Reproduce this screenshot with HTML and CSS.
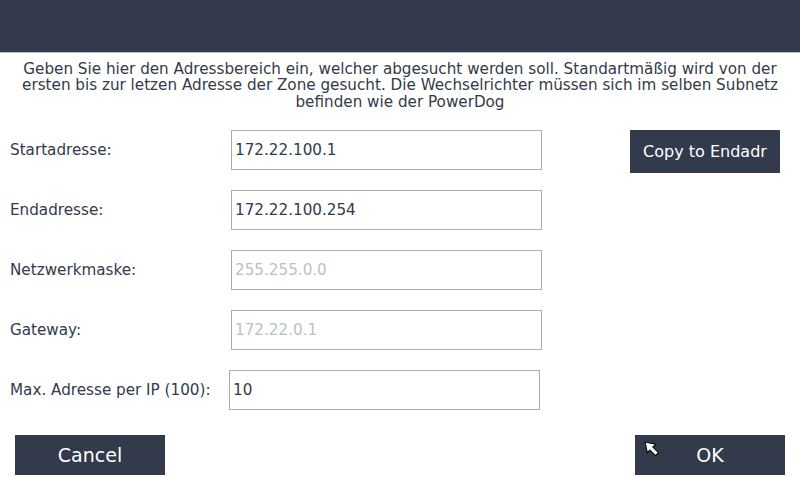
FILE: index.html
```html
<!DOCTYPE html>
<html lang="de">
<head>
<meta charset="utf-8">
<title>Adressbereich</title>
<link rel="stylesheet" href="styles.css">
</head>
<body>
<div class="screen">
  <header class="topbar"></header>
  <p class="intro">Geben Sie hier den Adressbereich ein, welcher abgesucht werden soll. Standartmäßig wird von der ersten bis zur letzen Adresse der Zone gesucht. Die Wechselrichter müssen sich im selben Subnetz befinden wie der PowerDog</p>
  <div class="form">
    <div class="row">
      <label class="label">Startadresse:</label>
      <input class="field" type="text" value="172.22.100.1">
      <button class="btn btn-copy">Copy to Endadr</button>
    </div>
    <div class="row">
      <label class="label">Endadresse:</label>
      <input class="field" type="text" value="172.22.100.254">
    </div>
    <div class="row">
      <label class="label">Netzwerkmaske:</label>
      <input class="field" type="text" placeholder="255.255.0.0">
    </div>
    <div class="row">
      <label class="label">Gateway:</label>
      <input class="field" type="text" placeholder="172.22.0.1">
    </div>
    <div class="row">
      <label class="label label-max">Max. Adresse per IP (100):</label>
      <input class="field" type="text" value="10">
    </div>
  </div>
  <div class="actions">
    <button class="btn btn-action">Cancel</button>
    <button class="btn btn-action">OK</button>
  </div>
  <svg class="cursor" width="18" height="18" viewBox="0 0 16 16">
    <path d="M1 1 L3 10.5 L5.2 8 L10.2 13 L12.8 10.4 L7.8 5.4 L10.5 3 Z" fill="#ffffff" stroke="#000000" stroke-width="0.9" stroke-linejoin="miter"/>
  </svg>
</div>
</body>
</html>
```

FILE: styles.css
```css
* { box-sizing: border-box; }

html, body {
  margin: 0;
  padding: 0;
  background: #ffffff;
}

.screen {
  position: relative;
  width: 800px;
  height: 480px;
  overflow: hidden;
  font-family: "DejaVu Sans", sans-serif;
  color: #323a4b;
}

.topbar {
  height: 53px;
  background: #323a4b;
  border-bottom: 1px solid #b9bec8;
}

.intro {
  margin: 7.5px 18px 0;
  font-family: "DejaVu Sans", sans-serif;
  font-size: 15.2px;
  line-height: 16.5px;
  text-align: center;
  color: #333a47;
}

.form {
  display: flex;
  flex-direction: column;
  gap: 20px;
  padding: 20px 0 0 10px;
}

.row {
  display: flex;
  align-items: center;
  height: 40px;
}

.label {
  width: 221px;
  flex: none;
  font-size: 15.2px;
  color: #323a4b;
}

.label-max {
  width: 219px;
}

.field {
  width: 311px;
  height: 40px;
  flex: none;
  margin: 0;
  padding: 0 0 0 3px;
  border: 1px solid #a9adab;
  border-radius: 0;
  background: #ffffff;
  font-family: "DejaVu Sans", sans-serif;
  font-size: 15.2px;
  color: #323a4b;
  outline: none;
}

.field::placeholder {
  color: #b8c3be;
  opacity: 1;
}

.btn {
  margin: 0;
  border: none;
  border-radius: 0;
  background: #323a4b;
  color: #ffffff;
  font-family: "DejaVu Sans", sans-serif;
  padding: 0;
  cursor: pointer;
}

.btn-copy {
  width: 150px;
  height: 43px;
  margin-left: 88px;
  align-self: flex-start;
  font-size: 16px;
}

.actions {
  display: flex;
  justify-content: space-between;
  padding: 25px 15px 0;
}

.btn-action {
  width: 150px;
  height: 40px;
  font-size: 19px;
}

.cursor {
  position: absolute;
  left: 644px;
  top: 441px;
}
```
